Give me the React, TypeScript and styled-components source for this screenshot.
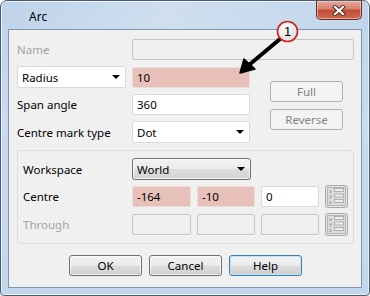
import styled, { createGlobalStyle, css } from "styled-components";

const GlobalStyle = createGlobalStyle`
  html, body { margin: 0; padding: 0; background: #ffffff; }
  body {
    font-family: "Segoe UI", "Noto Sans", "Liberation Sans", sans-serif;
    font-size: 11.5px;
    color: #000;
  }
`;

const Window = styled.div`
  position: relative;
  width: 370px;
  height: 296px;
  box-sizing: border-box;
  border: 1px solid #4e5d70;
  border-radius: 7px 7px 4px 4px;
  background: linear-gradient(180deg, #bed3ea 0%, #c9dbee 40%, #c3d7ec 100%);
  box-shadow: inset 0 0 0 1px #e6eef8;
  padding: 0 7px 7px;
  display: flex;
  flex-direction: column;
`;

const TitleBar = styled.div`
  height: 28px;
  display: flex;
  align-items: flex-start;
  background: linear-gradient(90deg, rgba(255,255,255,0.0) 0%, rgba(255,255,255,0.25) 45%, rgba(255,255,255,0.05) 100%);
`;

const TitleText = styled.span`
  margin-left: 21px;
  margin-top: 7px;
  font-size: 12px;
  color: #000;
`;

const CloseButton = styled.div`
  margin-left: auto;
  width: 46px;
  height: 19px;
  box-sizing: border-box;
  border: 1px solid #6d2b24;
  border-top: none;
  border-radius: 0 0 5px 5px;
  background: linear-gradient(180deg, #e7aa9d 0%, #d47f6e 45%, #c14b36 50%, #cf6a50 100%);
  box-shadow: inset 0 0 0 1px rgba(255, 220, 210, 0.55);
  display: flex;
  align-items: center;
  justify-content: center;
`;

const Client = styled.div`
  flex: 1;
  box-sizing: border-box;
  border: 1px solid #8396ad;
  background: #f0f0f0;
  padding: 9px 7px 0 8px;
  display: flex;
  flex-direction: column;
`;

const Row = styled.div<{ $label: number; $gap?: number }>`
  display: grid;
  grid-template-columns: ${(p) => p.$label}px auto;
  align-items: center;
  margin-top: ${(p) => p.$gap ?? 0}px;
`;

const Label = styled.span<{ $disabled?: boolean }>`
  color: ${(p) => (p.$disabled ? "#a3a3a3" : "#000")};
  white-space: nowrap;
`;

const TextBox = styled.div<{ $w: number; $tone?: "normal" | "pink" | "disabled" }>`
  width: ${(p) => p.$w}px;
  height: 21px;
  box-sizing: border-box;
  border: 1px solid #d9d9d9;
  border-radius: 2px;
  background: #fff;
  padding: 0 4px;
  display: flex;
  align-items: center;
  color: #000;
  ${(p) =>
    p.$tone === "pink" &&
    css`
      background: #e6c0b9;
      border-color: #ecdcd9;
    `}
  ${(p) =>
    p.$tone === "disabled" &&
    css`
      background: #f0f0f0;
      border-color: #c6c6c6;
    `}
`;

const Combo = styled.div<{ $w: number }>`
  width: ${(p) => p.$w}px;
  height: 22px;
  box-sizing: border-box;
  border: 1px solid #d9d9d9;
  border-radius: 2px;
  background: #fff;
  padding: 0 4px;
  display: flex;
  align-items: center;
  justify-content: space-between;
`;

const ButtonCombo = styled(Combo)`
  border: 1px solid #707070;
  border-radius: 3px;
  background: linear-gradient(180deg, #f3f3f3 0%, #ebebeb 48%, #dddddd 52%, #d2d2d2 100%);
  box-shadow: inset 0 0 0 1px rgba(255, 255, 255, 0.7);
`;

const Arrow = styled.span`
  width: 0;
  height: 0;
  border-left: 4px solid transparent;
  border-right: 4px solid transparent;
  border-top: 4px solid #000;
  margin-right: 1px;
`;

const UpperBlock = styled.div`
  display: flex;
  margin-top: 6px;
`;

const FieldStack = styled.div`
  display: flex;
  flex-direction: column;
  gap: 6px;
`;

const SideButtons = styled.div`
  display: flex;
  flex-direction: column;
  gap: 7px;
  margin-left: 20px;
  padding-top: 15px;
`;

const PushButton = styled.div<{ $w: number; $disabled?: boolean; $focused?: boolean }>`
  width: ${(p) => p.$w}px;
  height: 21px;
  box-sizing: border-box;
  border: 1px solid #707070;
  border-radius: 3px;
  background: linear-gradient(180deg, #f2f2f2 0%, #ebebeb 48%, #dddddd 52%, #cfcfcf 100%);
  box-shadow: inset 0 0 0 1px rgba(255, 255, 255, 0.75);
  display: flex;
  align-items: center;
  justify-content: center;
  color: #000;
  ${(p) =>
    p.$disabled &&
    css`
      border-color: #adb2b5;
      background: #f4f4f4;
      box-shadow: none;
      color: #838383;
    `}
  ${(p) =>
    p.$focused &&
    css`
      border-color: #3c7fb1;
      box-shadow: inset 0 0 0 1px #bfe4f9;
    `}
`;

const GroupBox = styled.div`
  margin-top: 7px;
  height: 94px;
  box-sizing: border-box;
  border: 1px solid #d5dfe5;
  border-radius: 3px;
  padding: 7px 6px 0 5px;
  display: flex;
  flex-direction: column;
`;

const CoordCells = styled.div`
  display: grid;
  grid-template-columns: 59px 58px 58px 23px;
  column-gap: 6px;
  align-items: center;
`;

const PickButton = styled.div`
  width: 23px;
  height: 23px;
`;

const Footer = styled.div`
  display: flex;
  justify-content: center;
  gap: 7px;
  margin-top: 11px;
`;

const Overlay = styled.svg`
  position: absolute;
  left: 0;
  top: 0;
  pointer-events: none;
`;

const axes: [string, number][] = [
  ["x", 7.5],
  ["y", 13],
  ["z", 18.5],
];

const XyzIcon = () => (
  <svg width="23" height="23" viewBox="0 0 23 23">
    <rect x="0.5" y="0.5" width="22" height="22" rx="2" fill="#e6e6e6" stroke="#a9a9a9" />
    <rect x="2.5" y="2.5" width="18" height="18" fill="#dcdcdc" stroke="#b5b5b5" />
    {axes.map(([ch, y]) => (
      <g key={ch}>
        <text x="4" y={y} fontSize="4.6" fontWeight="bold" fill="#9a9a9a" fontFamily="DejaVu Sans, sans-serif">
          {ch}
        </text>
        <rect x="9.5" y={y - 4} width="9" height="3" fill="#eeeeee" stroke="#a3a3a3" strokeWidth="0.8" />
      </g>
    ))}
  </svg>
);

export default function App() {
  return (
    <>
      <GlobalStyle />
      <Window>
        <TitleBar>
          <TitleText>Arc</TitleText>
          <CloseButton>
            <svg width="14" height="11" viewBox="0 0 14 11">
              <path d="M3 2 L11 9 M11 2 L3 9" stroke="#4a2a26" strokeWidth="4" strokeLinecap="square" />
              <path d="M3 2 L11 9 M11 2 L3 9" stroke="#ffffff" strokeWidth="2.2" strokeLinecap="square" />
            </svg>
          </CloseButton>
        </TitleBar>
        <Client>
          <Row $label={115}>
            <Label $disabled>Name</Label>
            <TextBox $w={222} $tone="disabled" />
          </Row>
          <UpperBlock>
            <FieldStack>
              <Row $label={115}>
                <Combo $w={109}>
                  <span>Radius</span>
                  <Arrow />
                </Combo>
                <TextBox $w={118} $tone="pink">10</TextBox>
              </Row>
              <Row $label={115}>
                <Label>Span angle</Label>
                <TextBox $w={118}>360</TextBox>
              </Row>
              <Row $label={115}>
                <Label>Centre mark type</Label>
                <Combo $w={118}>
                  <span>Dot</span>
                  <Arrow />
                </Combo>
              </Row>
            </FieldStack>
            <SideButtons>
              <PushButton $w={73} $disabled>Full</PushButton>
              <PushButton $w={73} $disabled>Reverse</PushButton>
            </SideButtons>
          </UpperBlock>
          <GroupBox>
            <Row $label={109}>
              <Label>Workspace</Label>
              <ButtonCombo $w={119}>
                <span>World</span>
                <Arrow />
              </ButtonCombo>
            </Row>
            <Row $label={109} $gap={5}>
              <Label>Centre</Label>
              <CoordCells>
                <TextBox $w={59} $tone="pink">-164</TextBox>
                <TextBox $w={58} $tone="pink">-10</TextBox>
                <TextBox $w={58}>0</TextBox>
                <PickButton>
                  <XyzIcon />
                </PickButton>
              </CoordCells>
            </Row>
            <Row $label={109} $gap={5}>
              <Label $disabled>Through</Label>
              <CoordCells>
                <TextBox $w={59} $tone="disabled" />
                <TextBox $w={58} $tone="disabled" />
                <TextBox $w={58} $tone="disabled" />
                <PickButton>
                  <XyzIcon />
                </PickButton>
              </CoordCells>
            </Row>
          </GroupBox>
          <Footer>
            <PushButton $w={73}>OK</PushButton>
            <PushButton $w={73}>Cancel</PushButton>
            <PushButton $w={73} $focused>Help</PushButton>
          </Footer>
        </Client>
        <Overlay width="370" height="296" viewBox="0 0 370 296">
          <defs>
            <radialGradient id="badge" cx="0.4" cy="0.35" r="0.7">
              <stop offset="0" stopColor="#ffffff" />
              <stop offset="1" stopColor="#dcdcdc" />
            </radialGradient>
          </defs>
          <path d="M279 38 L248 64" stroke="#000" strokeWidth="4" strokeLinecap="round" />
          <path d="M239 72 L243 58 L254 68 Z" fill="#000" stroke="#000" strokeWidth="1.5" strokeLinejoin="round" />
          <circle cx="286.5" cy="30.5" r="10" fill="url(#badge)" stroke="#d42020" strokeWidth="1.6" />
          <text x="286.5" y="35" textAnchor="middle" fontSize="13" fontFamily="Liberation Sans, sans-serif" fill="#000">
            1
          </text>
        </Overlay>
      </Window>
    </>
  );
}
